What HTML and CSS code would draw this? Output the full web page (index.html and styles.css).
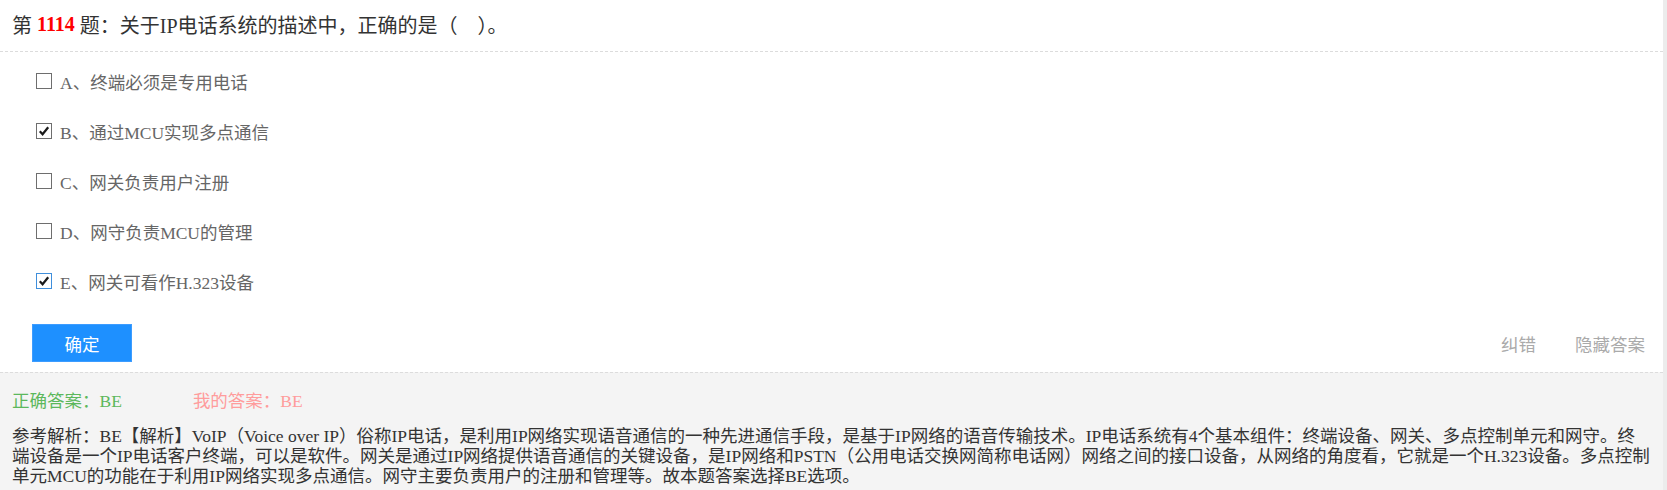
FILE: index.html
```html
<!DOCTYPE html>
<html lang="zh-CN">
<head>
<meta charset="utf-8">
<title>第 1114 题</title>
<link rel="stylesheet" href="styles.css">
</head>
<body>
<div class="page">
  <div class="q-head">第&nbsp;<b class="num">1114</b>&nbsp;题：关于IP电话系统的描述中，正确的是（&nbsp;&nbsp;&nbsp;&nbsp;）。</div>
  <div class="q-body">
    <ul class="options">
      <li class="opt"><span class="cb"></span><span class="txt">A、终端必须是专用电话</span></li>
      <li class="opt"><span class="cb on"><svg viewBox="0 0 14 14" width="14" height="14"><path d="M2.8 7.2 L5.6 10.2 L11.2 3.2" fill="none" stroke="#1a1a1a" stroke-width="2.2"/></svg></span><span class="txt">B、通过MCU实现多点通信</span></li>
      <li class="opt"><span class="cb"></span><span class="txt">C、网关负责用户注册</span></li>
      <li class="opt"><span class="cb"></span><span class="txt">D、网守负责MCU的管理</span></li>
      <li class="opt"><span class="cb on focus"><svg viewBox="0 0 14 14" width="14" height="14"><path d="M2.8 7.2 L5.6 10.2 L11.2 3.2" fill="none" stroke="#1a1a1a" stroke-width="2.2"/></svg></span><span class="txt">E、网关可看作H.323设备</span></li>
    </ul>
    <div class="actions">
      <button class="btn">确定</button>
      <div class="links"><a class="link">纠错</a><a class="link">隐藏答案</a></div>
    </div>
  </div>
  <div class="answer">
    <div class="ans-row"><span class="right">正确答案：BE</span><span class="mine">我的答案：BE</span></div>
    <p class="analysis">参考解析：BE【解析】VoIP（Voice over IP）俗称IP电话，是利用IP网络实现语音通信的一种先进通信手段，是基于IP网络的语音传输技术。IP电话系统有4个基本组件：终端设备、网关、多点控制单元和网守。终<br>端设备是一个IP电话客户终端，可以是软件。网关是通过IP网络提供语音通信的关键设备，是IP网络和PSTN（公用电话交换网简称电话网）网络之间的接口设备，从网络的角度看，它就是一个H.323设备。多点控制<br>单元MCU的功能在于利用IP网络实现多点通信。网守主要负责用户的注册和管理等。故本题答案选择BE选项。</p>
  </div>
</div>
</body>
</html>
```

FILE: styles.css
```css
html, body {
  margin: 0;
  padding: 0;
}
body {
  background: #ececec;
  font-family: "Liberation Serif", "Noto Sans CJK SC", serif;
  color: #333;
}
.page {
  margin-right: 4px;
  background: #fff;
  min-height: 100vh;
  display: flex;
  flex-direction: column;
}
.q-head {
  height: 52px;
  box-sizing: border-box;
  padding: 0 12px 3px;
  display: flex;
  align-items: center;
  font-size: 20px;
  color: #333;
  border-bottom: 1px dashed #dcdcdc;
  white-space: pre;
}
.num {
  color: #f00;
  font-weight: bold;
}
.options {
  list-style: none;
  margin: 0;
  padding: 4px 0 0 36px;
}
.opt {
  height: 50px;
  display: flex;
  align-items: center;
  font-size: 17.5px;
  color: #666;
}
.cb {
  width: 16px;
  height: 16px;
  box-sizing: border-box;
  border: 1px solid #6e6e6e;
  background: #fff;
  margin-right: 8px;
  display: flex;
  align-items: center;
  justify-content: center;
  flex: none;
}
.cb.focus {
  border-color: #3f8fdc;
}
.actions {
  display: flex;
  justify-content: space-between;
  align-items: center;
  padding: 18px 18px 10px 32px;
}
.btn {
  width: 100px;
  height: 38px;
  background: #1e90ff;
  border: 1px solid #3d9cff;
  color: #fff;
  font-family: "Noto Sans CJK SC", sans-serif;
  font-size: 17.5px;
  padding: 0;
}
.links {
  display: flex;
  gap: 39px;
}
.link {
  font-family: "Noto Sans CJK SC", sans-serif;
  font-size: 17.5px;
  color: #aaa;
}
.answer {
  flex: 1;
  background: #f4f4f4;
  border-top: 1px dashed #dcdcdc;
  padding: 18px 2px 0 12px;
}
.ans-row {
  font-size: 17.5px;
  line-height: 20px;
}
.right {
  color: #5cb85c;
}
.mine {
  color: #ff9c9c;
  margin-left: 71px;
}
.analysis {
  margin: 15px 0 0;
  font-size: 17.5px;
  line-height: 20px;
  color: #333;
  white-space: nowrap;
}
```
